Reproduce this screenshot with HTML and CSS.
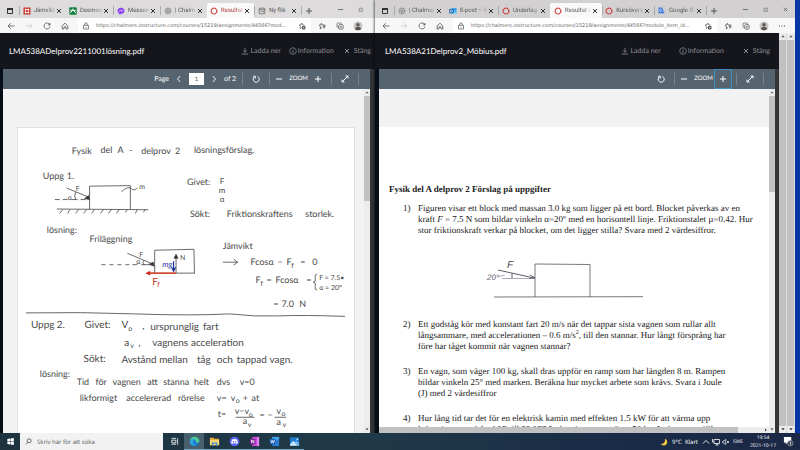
FILE: index.html
```html
<!DOCTYPE html>
<html lang="sv">
<head>
<meta charset="utf-8">
<title>Resultat</title>
<link rel="stylesheet" href="styles.css">
</head>
<body>
<svg class="defs" aria-hidden="true">
  <symbol id="i-tabs" viewBox="0 0 8 8"><path d="M1.5 1.5h5v5h-5z" fill="none" stroke="#333"/><path d="M1 1h6v2H1z" fill="#333"/></symbol>
  <symbol id="i-x" viewBox="0 0 8 8"><path d="M2 2l4 4M6 2L2 6" stroke="currentColor"/></symbol>
  <symbol id="i-plus" viewBox="0 0 8 8"><path d="M1 4h6M4 1v6" stroke="currentColor"/></symbol>
  <symbol id="i-minus" viewBox="0 0 8 8"><path d="M1 4h6" stroke="currentColor"/></symbol>
  <symbol id="i-max" viewBox="0 0 8 8"><path d="M2.5 2.5h3.5v3.5h-3.5z" fill="none" stroke="currentColor" stroke-width=".7"/></symbol>
  <symbol id="i-back" viewBox="0 0 8 8"><path d="M7.5 4H1M3.8 1.2L1 4l2.8 2.8" fill="none" stroke="currentColor" stroke-width=".8"/></symbol>
  <symbol id="i-fwd" viewBox="0 0 8 8"><path d="M.5 4H7M4.2 1.2L7 4 4.2 6.800" fill="none" stroke="currentColor" stroke-width=".8"/></symbol>
  <symbol id="i-reload" viewBox="0 0 8 8"><path d="M6.900 3A3 3 0 1 0 7 4.500M7 1v2H5" fill="none" stroke="currentColor" stroke-width=".8"/></symbol>
  <symbol id="i-rotate" viewBox="0 0 8 8"><path d="M2.300 1.900A3 3 0 1 0 5.500 1.500M1.300 1.300H3.300V3.500" fill="none" stroke="currentColor" stroke-width="1"/></symbol>
  <symbol id="i-home" viewBox="0 0 8 8"><path d="M1.200 3.800L4 1.200l2.800 2.600V7H5V4.800H3V7H1.200z" fill="none" stroke="currentColor" stroke-width=".8"/></symbol>
  <symbol id="i-lock" viewBox="0 0 8 8"><path d="M1.500 3.300h5V7h-5zM2.700 3.300V2.200a1.300 1.300 0 0 1 2.600 0v1.100" fill="none" stroke="currentColor" stroke-width=".7"/><circle cx="4" cy="5.200" r=".5" fill="currentColor"/></symbol>
  <symbol id="i-staradd" viewBox="0 0 8 8"><path d="M3.800 1l.8 1.800 2 .2M1 3l2-.2.800-1.800M1 3l1.500 1.400L2.100 6.500 3.500 5.700" fill="none" stroke="currentColor" stroke-width=".7"/><circle cx="5.700" cy="5.700" r="1.900" fill="#444"/><path d="M4.700 5.700h2M5.700 4.700v2" stroke="#fff" stroke-width=".5"/></symbol>
  <symbol id="i-fav" viewBox="0 0 8 8"><path d="M3.300 1.200l.8 1.900 2.100.1M1 3.200l1.600 1.400-.5 2.200 2-1.200M1 3.200l1.600-.2.700-1.800M5 4.500h2.500M5 5.800h2M5.200 3.200h2.300" fill="none" stroke="currentColor" stroke-width=".8"/></symbol>
  <symbol id="i-coll" viewBox="0 0 8 8"><rect x="1" y="1" width="4.500" height="4.500" rx="1" fill="none" stroke="currentColor" stroke-width=".7"/><rect x="2.700" y="2.700" width="4.500" height="4.500" rx="1" fill="#f7f7f7" stroke="currentColor" stroke-width=".7"/><path d="M3.700 5h2.500M5 3.700v2.500" stroke="currentColor" stroke-width=".6"/></symbol>
  <symbol id="i-user" viewBox="0 0 10 10"><circle cx="5" cy="5" r="4.500" fill="#c9c5c1"/><circle cx="5" cy="3.800" r="1.700" fill="#5a5552"/><path d="M1.800 8a3.300 3 0 0 1 6.400 0A4.500 4.500 0 0 1 1.800 8z" fill="#5a5552"/></symbol>
  <symbol id="i-dots" viewBox="0 0 8 8"><path d="M1 3.600h1v1H1zM3.500 3.600h1v1h-1zM6 3.600h1v1H6z" fill="#444"/></symbol>
  <symbol id="i-cross" viewBox="0 0 8 8"><path d="M.5.5h7v7h-7z" fill="#c5342a"/><path d="M1.700 2.500h4.600M1.700 5.500h4.600M2.600 1.500v5M5.400 1.500v5" stroke="#fff" stroke-width=".8"/></symbol>
  <symbol id="i-desmos" viewBox="0 0 8 8"><rect x=".3" y=".3" width="7.400" height="7.400" rx="1" fill="#15813f"/><path d="M1 5.700C3 5.700 3 1.800 4 1.800S5 5.700 7 5.700M1.500 3.500h5" stroke="#fff" fill="none" stroke-width=".9"/></symbol>
  <symbol id="i-mess" viewBox="0 0 8 8"><path d="M4 .7c2 0 3.500 1.300 3.500 3.100S6 6.900 4 6.900l-1.800.7v-1.200C1.200 5.900.500 5 .500 3.800.500 2 2 .7 4 .7z" fill="#8a3ff0"/><path d="M2 4.700l1.500-1.500 1 .9L6 3.200" stroke="#fff" fill="none" stroke-width=".8"/></symbol>
  <symbol id="i-chal" viewBox="0 0 8 8"><circle cx="4" cy="4" r="2.800" fill="#c4c4c4" stroke="#898989" stroke-width="1.200" stroke-dasharray="1.500 .5"/><path d="M2.500 4h3M4 2.500v3" stroke="#777" stroke-width=".7"/></symbol>
  <symbol id="i-canvas" viewBox="0 0 8 8"><circle cx="4" cy="4" r="2.900" fill="none" stroke="#cf3b3b" stroke-width="1.200" stroke-dasharray="1.900 .380"/></symbol>
  <symbol id="i-page" viewBox="0 0 8 8"><rect x="1.200" y="1.200" width="5.600" height="5.600" rx=".8" fill="none" stroke="#555" stroke-width=".7"/><path d="M1.200 2.700h5.600M2.600 4.200h2.800v1.300" fill="none" stroke="#555" stroke-width=".6"/></symbol>
  <symbol id="i-outlook" viewBox="0 0 8 8"><path d="M2.500 1h5v6h-5z" fill="#3fa4e8"/><path d="M2.500 4l2.500 1.700L7.500 4v3h-5z" fill="#7fd0f5"/><path d="M.3 2h4.200v4.300H.3z" fill="#0d5ca8"/><circle cx="2.400" cy="4.100" r="1.100" fill="none" stroke="#fff" stroke-width=".7"/></symbol>
  <symbol id="i-gt" viewBox="0 0 8 8"><path d="M3 2.500h4.700v5H4z" fill="#bfc6cf"/><path d="M.5.5h3.800L6 6.200H.5z" fill="#3b78e0"/><path d="M3.500 2.500a1.200 1.200 0 1 0 .2 1.200H2.700" fill="none" stroke="#fff" stroke-width=".6"/></symbol>
  <symbol id="i-dl" viewBox="0 0 8 8"><path d="M4 .8v4.400M2.200 3.500L4 5.300l1.800-1.800M.8 7h6.400" fill="none" stroke="currentColor" stroke-width=".8"/></symbol>
  <symbol id="i-info" viewBox="0 0 8 8"><circle cx="4" cy="4" r="3.300" fill="none" stroke="currentColor" stroke-width=".7"/><path d="M4.500 1.900l-.1.700M4.200 3.300L3.700 5.800h.7" fill="none" stroke="currentColor" stroke-width=".8"/></symbol>
  <symbol id="i-left" viewBox="0 0 8 8"><path d="M5.200 1L2.500 4l2.700 3" fill="none" stroke="currentColor" stroke-width=".9"/></symbol>
  <symbol id="i-right" viewBox="0 0 8 8"><path d="M2.800 1l2.700 3-2.700 3" fill="none" stroke="currentColor" stroke-width=".9"/></symbol>
  <symbol id="i-expand" viewBox="0 0 8 8"><path d="M1.300 6.700l5.400-5.400M4.600 1h2.400v2.400M1 4.600V7h2.400" fill="none" stroke="currentColor" stroke-width="1"/></symbol>
  <symbol id="i-up" viewBox="0 0 6 6"><path d="M1.500 3.700h3L3 2z" fill="#555"/></symbol>
  <symbol id="i-down" viewBox="0 0 6 6"><path d="M1.500 2h3L3 3.700z" fill="#333"/></symbol>
</svg>

<main class="desktop">
  <section class="window left-window" aria-label="Lösning">
    <div class="tabs">
      <button class="ico" aria-label="Flikar"><svg><use href="#i-tabs"/></svg></button>
      <button class="tab"><svg><use href="#i-cross"/></svg><span>Jämvikt</span><svg><use href="#i-x"/></svg></button>
      <button class="tab"><svg><use href="#i-desmos"/></svg><span>Desmos</span><svg><use href="#i-x"/></svg></button>
      <button class="tab"><svg><use href="#i-mess"/></svg><span>Messen</span><svg><use href="#i-x"/></svg></button>
      <button class="tab"><svg><use href="#i-chal"/></svg><span>| Chalm</span><svg><use href="#i-x"/></svg></button>
      <button class="tab active"><svg><use href="#i-canvas"/></svg><span>Resultat</span><svg><use href="#i-x"/></svg></button>
      <button class="tab plain"><svg><use href="#i-page"/></svg><span>Ny flik</span><svg><use href="#i-x"/></svg></button>
      <button class="new" aria-label="Ny flik"><svg><use href="#i-plus"/></svg></button>
      <div class="controls">
        <button aria-label="Minimera"><svg><use href="#i-minus"/></svg></button>
        <button aria-label="Maximera"><svg><use href="#i-max"/></svg></button>
      </div>
    </div>
    <div class="address">
      <button aria-label="Bakåt"><svg><use href="#i-back"/></svg></button>
      <button class="off" aria-label="Framåt"><svg><use href="#i-fwd"/></svg></button>
      <button aria-label="Uppdatera"><svg><use href="#i-reload"/></svg></button>
      <button aria-label="Hem"><svg><use href="#i-home"/></svg></button>
      <div class="field"><svg><use href="#i-lock"/></svg><input aria-label="Adress" value="https://chalmers.instructure.com/courses/15219/assignments/44566?mod..."><button aria-label="Lägg till favorit"><svg><use href="#i-staradd"/></svg></button></div>
      <button aria-label="Favoriter"><svg><use href="#i-fav"/></svg></button>
      <button aria-label="Samlingar"><svg><use href="#i-coll"/></svg></button>
      <button class="user" aria-label="Profil"><svg><use href="#i-user"/></svg></button>
    </div>
    <header class="doc-head">
      <h1>LMA538ADelprov2211001lösning.pdf</h1>
      <a href="#"><svg><use href="#i-dl"/></svg>Ladda ner</a>
      <a href="#"><svg><use href="#i-info"/></svg>Information</a>
      <a class="close" href="#"><svg><use href="#i-x"/></svg>Stäng</a>
    </header>
    <div class="viewer">
      <div class="pdf-bar">
        <label for="pg">Page</label>
        <button class="step" aria-label="Föregående"><svg><use href="#i-left"/></svg></button>
        <input id="pg" value="1">
        <button class="step" aria-label="Nästa"><svg><use href="#i-right"/></svg></button>
        <span class="of">of 2</span>
        <i></i><button class="wide" aria-label="Rotera"><svg><use href="#i-rotate"/></svg></button><i></i>
        <button aria-label="Zooma ut"><svg><use href="#i-minus"/></svg></button><span class="zoom">ZOOM</span><button class="zoom-in" aria-label="Zooma in"><svg><use href="#i-plus"/></svg></button>
        <i></i><button class="wide" aria-label="Helskärm"><svg><use href="#i-expand"/></svg></button><i></i>
      </div>
      <div class="scroll-area">
        <div class="canvas">
          <article class="sheet notes">
            <svg viewBox="17 127 338 306" preserveAspectRatio="xMinYMin meet">
              <g class="ink">
                <g class="m">
                  <text x="71" y="153">Fysik</text><text x="100" y="152">del</text><text x="117" y="152">A</text><text x="129" y="152">-</text><text x="141" y="153">delprov</text><text x="175" y="153">2</text><text x="194" y="152">lösningsförslag,</text>
                  <text x="42" y="178">Uppg</text><text x="66" y="178">1.</text>
                  <text x="187" y="184">Givet:</text>
                  <text x="190" y="217">Sökt:</text><text x="227" y="217">Friktionskraftens</text><text x="306" y="217">storlek.</text>
                  <text x="46" y="233">lösning:</text><text x="89" y="242">Friläggning</text>
                  <text x="223" y="249">Jämvikt</text>
                  <text x="251" y="265">Fcosα</text><text x="278" y="265">−</text><text x="287" y="265">F</text><text x="301" y="265">=</text><text x="313" y="265">0</text>
                  <text x="256" y="283">F</text><text x="267" y="283">=</text><text x="276" y="283">Fcosα</text><text x="307" y="283">=</text>
                  <text x="274" y="307">=</text><text x="282" y="307">7.0</text><text x="300" y="307">N</text>
                </g>
                <g class="given">
                  <text x="220" y="183">F</text><text x="219" y="192">m</text><text x="220" y="201">α</text>
                </g>
                <g class="s">
                  <text x="292" y="268">f</text><text x="261" y="286">f</text>
                  <text x="320" y="280">F = 7.5•</text><text x="320" y="290">α = 20°</text>
                  <text x="75" y="190">F</text><text x="67" y="199">α</text><text x="139" y="188">m</text>
                  <text x="139" y="257">F</text><text x="136" y="264">α</text><text x="180" y="260">N</text>
                  <text x="128" y="331">o</text><text x="130" y="348">v</text>
                  <text x="236" y="404">o</text><text x="249" y="418">o</text><text x="248" y="428">v</text><text x="282" y="417">o</text><text x="283" y="428">v</text>
                </g>
                <g class="l">
                  <text x="30" y="328">Uppg</text><text x="56" y="328">2.</text><text x="84" y="328">Givet:</text><text x="121" y="328">V</text><text x="142" y="329">,</text><text x="150" y="330">ursprunglig</text><text x="203" y="330">fart</text>
                  <text x="124" y="346">a</text><text x="138" y="346">,</text><text x="152" y="346">vagnens</text><text x="191" y="346">acceleration</text>
                  <text x="83" y="362">Sökt:</text><text x="121" y="363">Avstånd</text><text x="159" y="363">mellan</text><text x="197" y="363">tåg</text><text x="217" y="363">och</text><text x="237" y="363">tappad</text><text x="270" y="363">vagn.</text>
                </g>
                <g class="m">
                  <text x="39" y="377">lösning:</text>
                  <text x="76" y="386">Tid</text><text x="95" y="386">för</text><text x="112" y="386">vagnen</text><text x="147" y="386">att</text><text x="163" y="386">stanna</text><text x="194" y="386">helt</text><text x="217" y="386">dvs</text><text x="240" y="386">v=0</text>
                  <text x="79" y="402">likformigt</text><text x="126" y="402">accelererad</text><text x="178" y="402">rörelse</text><text x="217" y="402">v=</text><text x="231" y="402">v</text><text x="243" y="402">+</text><text x="252" y="402">at</text>
                  <text x="218" y="418">t=</text><text x="235" y="415">v−v</text><text x="243" y="425">a</text><text x="260" y="419">=</text><text x="268" y="419">−</text><text x="277" y="415">v</text><text x="277" y="426">a</text>
                </g>
                <text class="blue" x="162" y="267">mg</text>
                <text class="red" x="152" y="285">F</text><text class="red-s" x="157" y="287">f</text>
              </g>
              <g class="stroke">
                <path d="M89 185.500l41-.5v24M89 185.500V209M66 187.500L88 196.500M54 199h5M62 199h5M71 199h6M80 199h5M75 191.500q-2 4 0 7.500M56 208.500l92 .7M62 209l-3 4M69 209l-2 4M78 209l-3 4M86 209l-3 4M94 209l-3 4M103 209l-3 4M111 209l-3 4M119 209l-3 4M127 209l-2 3M137 209l-2 4M145 209l-2 3M121 191q7-6 10-3t6-1"/>
                <path d="M154.500 273v-23l39.500-1 .5 24M127 253l26 11M101 264.500h4M109 264.500h4M117 264.500h4M125 264.500h4M132 264.500h5M141 264.500h11M144 260q-3 2 0 5M176 273v-17M176 273h19"/>
                <path d="M223 262h15M234 259l4 3-4 3M318 274q-3 0-2 4t-2 4q3 0 2 4t2 4M236 418h19M275 418h12"/>
                <path d="M25 313q55-1 110 1t95 0q25 3 50 2t66 .5" class="rule"/>
                <path d="M88 195l1 4-5-1zM153 262l1 4-5-2zM174 258l2-4 2 4z" class="head"/>
                <path d="M173.500 261v9M171.500 267l2 4 2-4" class="blue-line"/>
                <path d="M148 273h28" class="red-line"/><path d="M145 273l5-2.500v5z" class="red-head"/>
              </g>
            </svg>
          </article>
        </div>
        <div class="vbar v-left"><svg><use href="#i-up"/></svg><b></b><svg><use href="#i-down"/></svg></div>
      </div>
    </div>
  </section>

  <section class="window right-window" aria-label="Uppgifter">
    <div class="tabs">
      <button class="ico" aria-label="Flikar"><svg><use href="#i-tabs"/></svg></button>
      <button class="tab"><svg><use href="#i-chal"/></svg><span>| Chalmer</span><svg><use href="#i-x"/></svg></button>
      <button class="tab"><svg><use href="#i-outlook"/></svg><span>E-post – fi</span><svg><use href="#i-x"/></svg></button>
      <button class="tab"><svg><use href="#i-canvas"/></svg><span>Underlag</span><svg><use href="#i-x"/></svg></button>
      <button class="tab active"><svg><use href="#i-canvas"/></svg><span>Resultat i</span><svg><use href="#i-x"/></svg></button>
      <button class="tab"><svg><use href="#i-canvas"/></svg><span>Kursövers</span><svg><use href="#i-x"/></svg></button>
      <button class="tab"><svg><use href="#i-gt"/></svg><span>Google Ö</span><svg><use href="#i-x"/></svg></button>
      <button class="new" aria-label="Ny flik"><svg><use href="#i-plus"/></svg></button>
      <div class="controls">
        <button aria-label="Minimera"><svg><use href="#i-minus"/></svg></button>
        <button aria-label="Maximera"><svg><use href="#i-max"/></svg></button>
        <button aria-label="Stäng"><svg><use href="#i-x"/></svg></button>
      </div>
    </div>
    <div class="address">
      <button aria-label="Bakåt"><svg><use href="#i-back"/></svg></button>
      <button class="off" aria-label="Framåt"><svg><use href="#i-fwd"/></svg></button>
      <button aria-label="Uppdatera"><svg><use href="#i-reload"/></svg></button>
      <button aria-label="Hem"><svg><use href="#i-home"/></svg></button>
      <div class="field"><svg><use href="#i-lock"/></svg><input aria-label="Adress" value="https://chalmers.instructure.com/courses/15219/assignments/44566?module_item_id..."><button aria-label="Lägg till favorit"><svg><use href="#i-staradd"/></svg></button></div>
      <button aria-label="Favoriter"><svg><use href="#i-fav"/></svg></button>
      <button aria-label="Samlingar"><svg><use href="#i-coll"/></svg></button>
      <button class="user" aria-label="Profil"><svg><use href="#i-user"/></svg></button>
      <button aria-label="Meny"><svg><use href="#i-dots"/></svg></button>
    </div>
    <div class="body-row">
      <div class="body-main">
        <header class="doc-head">
          <h1>LMA538A21Delprov2_Möbius.pdf</h1>
          <a href="#"><svg><use href="#i-dl"/></svg>Ladda ner</a>
          <a href="#"><svg><use href="#i-info"/></svg>Information</a>
          <a class="close" href="#"><svg><use href="#i-x"/></svg>Stäng</a>
        </header>
        <div class="viewer">
          <div class="pdf-bar">
            <button class="wide" aria-label="Rotera"><svg><use href="#i-rotate"/></svg></button><i></i>
            <button aria-label="Zooma ut"><svg><use href="#i-minus"/></svg></button><span class="zoom">ZOOM</span><button class="zoom-in focus" aria-label="Zooma in"><svg><use href="#i-plus"/></svg></button>
            <i></i><button class="wide" aria-label="Helskärm"><svg><use href="#i-expand"/></svg></button><i></i>
          </div>
          <div class="scroll-area">
            <div class="canvas">
              <article class="sheet tasks">
                <h2>Fysik del A delprov 2 Förslag på uppgifter</h2>
                <ol>
                  <li>Figuren visar ett block med massan 3.0 kg som ligger på ett bord. Blocket påverkas av en<br>kraft <em>F</em> = 7.5 N som bildar vinkeln α=20º med en horisontell linje. Friktionstalet µ=0.42. Hur<br>stor friktionskraft verkar på blocket, om det ligger stilla? Svara med 2 värdesiffror.
                    <svg class="figure" viewBox="486 254 160 46">
                      <path d="M494 297l149-.3M535 297v-33l55 .5V297" fill="none" stroke="#555" stroke-width=".8"/>
                      <path d="M498 270l36 8M530 275l5 3-6 .5M512 273.500v5" fill="none" stroke="#334" stroke-width=".8"/>
                      <path d="M502 278.500h33M497 277l8-2" fill="none" stroke="#889" stroke-width=".7"/>
                      <text x="507" y="268" class="fig-f">F</text><text x="487" y="280" class="fig-a">20°</text>
                    </svg>
                  </li>
                  <li>Ett godståg kör med konstant fart 20 m/s när det tappar sista vagnen som rullar allt<br>långsammare, med accelerationen – 0.6 m/s<sup>2</sup>, till den stannar. Hur långt försprång har<br>före har tåget kommit när vagnen stannar?</li>
                  <li>En vagn, som väger 100 kg, skall dras uppför en ramp som har längden 8 m. Rampen<br>bildar vinkeln 25° med marken. Beräkna hur mycket arbete som krävs. Svara i Joule<br>(J) med 2 värdesiffror</li>
                  <li>Hur lång tid tar det för en elektrisk kamin med effekten 1.5 kW för att värma upp<br>luften i ett rum från 4 °C till 22 °C? Luften i rummet väger 50 kg. Luftens specifika</li>
                </ol>
              </article>
              <div class="hbar"><b></b><svg viewBox="0 0 6 6"><path d="M2 1.500v3L3.700 3z" fill="#333"/></svg></div>
            </div>
            <div class="vbar v-right"><svg><use href="#i-up"/></svg><b></b><svg><use href="#i-down"/></svg></div>
          </div>
        </div>
      </div>
      <div class="vbar page-bar"><svg><use href="#i-up"/></svg><b></b><svg><use href="#i-down"/></svg></div>
      <div class="vbar page-bar"><svg><use href="#i-up"/></svg><b></b><svg><use href="#i-down"/></svg></div>
    </div>
  </section>
</main>

<footer class="taskbar">
  <button aria-label="Start"><svg viewBox="0 0 10 10"><path d="M1.500 2.200l3-.4v3h-3zM5 1.700l3.700-.5v3.600H5zM1.500 5.200h3v3l-3-.4zM5 5.200h3.700v3.600L5 8.300z" fill="#fff"/></svg></button>
  <label class="search"><svg viewBox="0 0 8 8"><circle cx="4.700" cy="3.200" r="2.300" fill="none" stroke="#333" stroke-width=".8"/><path d="M3 5L1 7.300" stroke="#333" stroke-width=".8"/></svg><input aria-label="Sök" placeholder="Skriv här för att söka"></label>
  <button aria-label="Aktivitetsvy"><svg viewBox="0 0 10 10"><path d="M2 3.500h4.500v3H2zM2 2V1.500h4.500V2M2 8.500V8h4.500v.500M8.500 1.500v7" fill="none" stroke="#fff" stroke-width=".9"/></svg></button>
  <button class="app on" aria-label="Edge"><svg viewBox="0 0 12 12"><circle cx="6" cy="6" r="5.300" fill="#1878c8"/><path d="M1 5C2-.5 10-.5 11.300 5c.3 2.500-3 3-4 2 1-1.500 0-3-1.800-3C3 4 1.500 4.500 1 5z" fill="#4fd08f"/><path d="M1 5c2-3 6-2.500 6-.5-3-.5-3.500 4 .5 5.500C4 12 0 9 1 5z" fill="#2ba3dc"/></svg></button>
  <button class="app" aria-label="Utforskaren"><svg viewBox="0 0 12 12"><path d="M1 2h4l1 1h5v7H1z" fill="#e8b33d"/><path d="M1 4.500h10V10H1z" fill="#f8d775"/><path d="M3 7h6v3.500H7.500v-2h-3v2H3z" fill="#3b8fd6"/></svg></button>
  <button class="app" aria-label="Discord"><svg viewBox="0 0 12 12"><circle cx="6" cy="6" r="5.300" fill="#5865f2"/><path d="M3.500 3.700Q6 3 8.500 3.700 9.800 6 9.500 8L8 8.700l-.5-.9h-3L4 8.700 2.500 8Q2.200 6 3.500 3.700z" fill="#fff"/><circle cx="4.800" cy="6.200" r=".8" fill="#5865f2"/><circle cx="7.200" cy="6.200" r=".8" fill="#5865f2"/></svg></button>
  <button class="app" aria-label="OneNote"><svg viewBox="0 0 12 12"><path d="M3.500 1H11v10H3.500z" fill="#c94fd8"/><path d="M9 1h2v10H9z" fill="#e58af0"/><path d="M1 3h6v6H1z" fill="#7b1c93"/><path d="M2.800 7.800V4.200l2.400 3.600V4.200" fill="none" stroke="#fff" stroke-width=".9"/></svg></button>
  <button class="app" aria-label="Word"><svg viewBox="0 0 12 12"><path d="M3.500 1H11v10H3.500z" fill="#2b7cd3"/><path d="M3.500 1H11v3H3.500z" fill="#41a5ee"/><path d="M1 3h6v6H1z" fill="#185abd"/><path d="M2 4.200l1 3.600 1-3 1 3 1-3.600" fill="none" stroke="#fff" stroke-width=".8"/></svg></button>
  <button class="app" aria-label="Foton"><svg viewBox="0 0 12 12"><path d="M1 1.500h10v9H1z" fill="#1d7bd0"/><path d="M1 9.500l3.500-4.300 5 5.300H1z" fill="#c8e8fb"/><path d="M6 7l2-2 3 3.500v2H9.500z" fill="#79bdf0"/><circle cx="9" cy="3.500" r=".8" fill="#fff"/></svg></button>
  <div class="tray">
    <button class="weather"><svg viewBox="0 0 10 10"><path d="M6 1a4.300 4.300 0 1 1-5 6.300C5 8 7 5 6 1z" fill="#f8c63c"/></svg>9°C&nbsp; Klart</button>
    <button aria-label="Visa dolda"><svg viewBox="0 0 8 8"><path d="M1 5.500l3-3 3 3" fill="none" stroke="#fff" stroke-width=".9"/></svg></button>
    <button aria-label="Nätverk"><svg viewBox="0 0 8 8"><path d="M2 1.500h5.500v4H2zM3.500 7h3M5 5.500V7M.5 1v3h1.500" fill="none" stroke="#fff" stroke-width=".8"/></svg></button>
    <button aria-label="Ljud"><svg viewBox="0 0 8 8"><path d="M.8 3v2H2l1.800 1.600V1.400L2 3zM5 3l2 2M7 3L5 5" fill="none" stroke="#fff" stroke-width=".7"/></svg></button>
    <button class="lang">SWE</button>
    <button class="clock">19:54<br>2021-10-17</button>
    <button class="note" aria-label="Meddelanden"><svg viewBox="0 0 12 12"><path d="M1 1h8v6H5L3 9V7H1z" fill="#fff"/><circle cx="8" cy="8" r="3" fill="#3a4358" stroke="#bbb" stroke-width=".6"/><path d="M7.500 7l.7-.5v3.200" fill="none" stroke="#fff" stroke-width=".7"/></svg></button>
  </div>
</footer>
</body>
</html>
```
FILE: styles.css
```css
* { box-sizing: border-box; }
body {
  margin: 0;
  height: 100vh;
  display: flex;
  flex-direction: column;
  overflow: hidden;
  background: #0a37a6;
  font: 6px/8px "Open Sans", "Liberation Sans", sans-serif;
  text-rendering: geometricPrecision;
}
button, input { margin: 0; padding: 0; border: 0; background: none; font: inherit; color: inherit; min-width: 0; text-rendering: inherit; }
button { display: flex; align-items: center; justify-content: center; }
a { color: inherit; text-decoration: none; }
svg { flex: none; width: 8px; height: 8px; display: block; }
.defs { position: absolute; width: 0; height: 0; }

.desktop { flex: 1; min-height: 0; display: grid; grid-template-columns: 375fr 420fr; padding-right: 5px; }
.window { display: flex; flex-direction: column; min-width: 0; min-height: 0; background: #15161c; }
.right-window { box-shadow: -1px 0 2px #0008; }

.tabs { flex: none; display: flex; height: 18px; padding-top: 3px; background: #d2d0d0; color: #555; font-family: Roboto, "Liberation Sans", sans-serif; }
.left-window .tabs { background: #dddbdb; }
.tabs .ico { width: 19px; }
.tab { flex: none; width: 47px; padding: 0 3px; position: relative; }
.right-window .tab { width: 52px; }
.tab::before { content: ""; width: 1px; height: 9px; margin: 0 3px 0 -3px; background: #aaa; }
.tab span { flex: 1; margin-left: 3px; white-space: nowrap; text-align: left; mask-image: linear-gradient(90deg, #000 60%, #0004); }
.tab svg:last-child { color: #333; }
.tab.active { background: #f9f9f9; border-radius: 2px 2px 0 0; }
.tab.active::before { background: none; }
.tab.active span { color: #a33; }
.right-window .tab.active span { color: #555; }
.tab.plain span { mask-image: none; }
.new { width: 14px; border-left: 1px solid #aaa; margin: 3px 0; }
.controls { display: flex; flex: 1; justify-content: flex-end; padding-bottom: 3px; color: #666; }
.controls button { width: 20px; }
.controls svg { width: 7px; height: 7px; }
.left-window .controls { padding-right: 5px; }

.address { flex: none; display: flex; height: 15px; padding: 0 8px 0 2px; background: #f7f7f7; color: #555; }
.right-window .address { padding-right: 4px; }
.address button { flex: none; width: 18px; }
.address .off { color: #ccc; }
.address .user svg { width: 10px; height: 10px; }
.field { flex: 1; min-width: 0; display: flex; align-items: center; margin: 0 2px 0 4px; padding-left: 4px; background: #fff; }
.field input { flex: 1; margin-left: 6px; font-family: "DejaVu Sans", sans-serif; font-size: 5px; color: #666; }

.doc-head { flex: none; display: flex; align-items: center; height: 36px; padding: 0 4px 0 9px; background: #15161c; color: #8c8d92; font: 7px/10px Lato, "Liberation Sans", sans-serif; }
.doc-head h1 { flex: 1; margin: 0; font-size: 8px; font-weight: 400; color: #fff; }
.doc-head a { display: flex; align-items: center; gap: 1px; margin-left: 8px; }
.doc-head .close { margin-left: 9px; gap: 3px; }
.right-window .doc-head { padding: 0 9px 0 10px; }
.right-window .doc-head a { margin-left: 18px; }

.viewer { flex: 1; min-height: 0; display: flex; flex-direction: column; border: solid #333539; border-width: 0 5px 0 3px; border-left-color: #060f19; }
.right-window .viewer { border-width: 0 4px; }
.pdf-bar { flex: none; display: flex; align-items: center; justify-content: flex-end; height: 20px; padding-right: 11px; background: #56646f; color: #fff; font: 7px/10px Lato, "Liberation Sans", sans-serif; }
.pdf-bar i { width: 1px; height: 12px; background: #76838d; }
.pdf-bar button { width: 18px; height: 20px; }
.pdf-bar .wide { width: 26px; }
.pdf-bar .step { width: 20px; }
.pdf-bar input { width: 15px; height: 12px; background: #fff; color: #555; text-align: center; font-size: 6px; }
.of { width: 18px; }
.zoom { width: 21px; text-align: center; font-size: 6px; }
.pdf-bar .zoom-in { margin-right: 4px; }
.pdf-bar .focus { border: 1px solid #3f8fc4; }
.scroll-area { flex: 1; min-height: 0; display: flex; background: #f2f2f2; }
.canvas { flex: 1; min-width: 0; display: flex; flex-direction: column; overflow: hidden; }
.sheet { flex: 1; min-height: 0; overflow: hidden; background: #fff; margin-top: 38px; }
.notes { margin-left: 14px; margin-right: 9px; border: solid #e0e0e0; border-width: 1px 1px 0; }
.notes svg { width: 100%; height: auto; }

.vbar { flex: none; display: flex; flex-direction: column; width: 6px; background: #ececec; }
.vbar svg { width: 6px; height: 7px; }
.vbar b { flex: 1; background: #c1c1c1; }
.v-left b { flex: none; height: 105px; margin-bottom: auto; }
.v-right b { flex: none; height: 96px; margin-bottom: auto; }
.page-bar { width: 8px; border-right: 1px solid #ddd; }
.page-bar svg { width: 8px; }
.body-row { flex: 1; min-height: 0; display: flex; }
.body-main { flex: 1; min-width: 0; display: flex; flex-direction: column; }
.hbar { flex: none; display: flex; justify-content: space-between; height: 6px; background: #ececec; }
.hbar b { width: 92%; background: #c1c1c1; }
.hbar svg { width: 6px; height: 6px; }

.ink { font-family: Lato, "Liberation Sans", sans-serif; fill: #484848; }
.m { font-size: 9px; }
.s { font-size: 7px; }
.given { font-size: 8px; }
.l { font-size: 10px; }
.blue { font-size: 8px; font-style: italic; fill: #1c2f9c; }
.red { font-size: 10px; fill: #c23322; }
.red-s { font-size: 7px; fill: #c23322; }
.stroke { fill: none; stroke: #444; stroke-width: .8; }
.rule { stroke: #666; stroke-width: 1; }
.head { fill: #333; }
.blue-line { stroke: #1c2f9c; stroke-width: 1.2; }
.red-line { stroke: #cc3a22; stroke-width: 1.600; }
.red-head { stroke: none; fill: #cc2a18; }

.tasks { padding: 57px 8px 0 10px; font: 9px/11px "Liberation Serif", serif; color: #222; white-space: nowrap; }
.tasks h2 { margin: 0 0 8px; font-size: 9px; line-height: 11px; }
.tasks ol { margin: 0; padding-left: 29px; counter-reset: q; list-style: none; }
.tasks li { margin-bottom: 14px; counter-increment: q; }
.tasks li::before { content: counter(q) ")"; float: left; margin-left: -15px; }
.tasks sup { font-size: 6px; line-height: 1px; }
.figure { width: 160px; height: 46px; margin: 18px 0 19px 68px; }
.fig-f { font: italic 10px "Liberation Sans", sans-serif; fill: #445; }
.fig-a { font: italic 8px "Liberation Sans", sans-serif; fill: #667; }

.taskbar { flex: none; display: flex; height: 17px; background: linear-gradient(90deg, #1d3340 0%, #203a48 45%, #1a2c47 75%, #1b2846 100%); color: #fff; }
.taskbar > button { width: 20px; }
.taskbar > button svg { width: 9px; height: 9px; }
.taskbar > .app svg { width: 11px; height: 11px; }
.taskbar > .app { border-bottom: 1px solid #6fa9d0; }
.app.on { background: #48606d; }
.search { display: flex; align-items: center; width: 143px; margin-right: 1px; padding-left: 5px; gap: 5px; background: #f2f2f2; }
.search svg { width: 7px; height: 7px; }
.search input { flex: 1; color: #444; }
.search input::placeholder { color: #555; opacity: 1; }
.tray { display: flex; margin-left: auto; padding-right: 5px; }
.tray button { width: 10px; }
.tray svg { width: 8px; height: 8px; }
.tray .weather { width: auto; gap: 4px; margin-right: 3px; }
.tray .lang { width: 14px; font-size: 5px; }
.tray .clock { width: 36px; font-size: 5px; }
.tray .note { width: 14px; }
.tray .note svg { width: 11px; height: 11px; }
```
